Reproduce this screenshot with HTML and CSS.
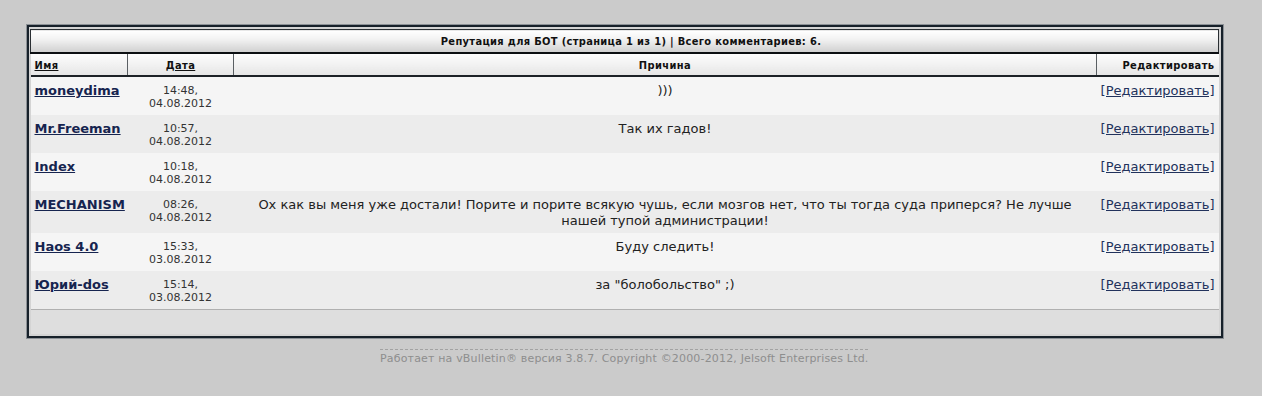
FILE: index.html
```html
<!DOCTYPE html>
<html>
<head>
  <meta charset="UTF-8">
  <title>Репутация для БОТ</title>
  <link rel="stylesheet" href="styles.css">
</head>
<body>
  <div class="wrap">
    <div class="tborder">
      <table class="rep">
        <colgroup>
          <col class="col-name">
          <col class="col-date">
          <col>
          <col class="col-edit">
        </colgroup>
        <tr>
          <td class="tcat" colspan="4">Репутация для БОТ (страница 1 из 1) | Всего комментариев: 6.</td>
        </tr>
        <tr class="thead">
          <td class="c-name"><a href="#">Имя</a></td>
          <td class="c-date"><a href="#">Дата</a></td>
          <td class="c-reason">Причина</td>
          <td class="c-edit">Редактировать</td>
        </tr>
        <tr class="alt1">
          <td class="c-name"><a class="user" href="#">moneydima</a></td>
          <td class="c-date">14:48,<br>04.08.2012</td>
          <td class="c-reason">)))</td>
          <td class="c-edit"><a href="#">[Редактировать]</a></td>
        </tr>
        <tr class="alt2">
          <td class="c-name"><a class="user" href="#">Mr.Freeman</a></td>
          <td class="c-date">10:57,<br>04.08.2012</td>
          <td class="c-reason">Так их гадов!</td>
          <td class="c-edit"><a href="#">[Редактировать]</a></td>
        </tr>
        <tr class="alt1">
          <td class="c-name"><a class="user" href="#">Index</a></td>
          <td class="c-date">10:18,<br>04.08.2012</td>
          <td class="c-reason"></td>
          <td class="c-edit"><a href="#">[Редактировать]</a></td>
        </tr>
        <tr class="alt2">
          <td class="c-name"><a class="user" href="#">MECHANISM</a></td>
          <td class="c-date">08:26,<br>04.08.2012</td>
          <td class="c-reason">Ох как вы меня уже достали! Порите и порите всякую чушь, если мозгов нет, что ты тогда суда приперся? Не лучше нашей тупой администрации!</td>
          <td class="c-edit"><a href="#">[Редактировать]</a></td>
        </tr>
        <tr class="alt1">
          <td class="c-name"><a class="user" href="#">Haos 4.0</a></td>
          <td class="c-date">15:33,<br>03.08.2012</td>
          <td class="c-reason">Буду следить!</td>
          <td class="c-edit"><a href="#">[Редактировать]</a></td>
        </tr>
        <tr class="alt2">
          <td class="c-name"><a class="user" href="#">Юрий-dos</a></td>
          <td class="c-date">15:14,<br>03.08.2012</td>
          <td class="c-reason">за "болобольство" ;)</td>
          <td class="c-edit"><a href="#">[Редактировать]</a></td>
        </tr>
        <tr>
          <td class="tfoot" colspan="4"></td>
        </tr>
      </table>
    </div>
    <div class="copyright">Работает на vBulletin® версия 3.8.7. Copyright ©2000-2012, Jelsoft Enterprises Ltd.</div>
  </div>
</body>
</html>
```

FILE: styles.css
```css
body {
  margin: 0;
  padding: 0;
  background-color: #cbcbcb;
  font-family: "DejaVu Sans", Verdana, sans-serif;
  color: #222;
}

.wrap {
  padding: 25px 0 0 27px;
  width: 1196px;
}

.tborder {
  border: 2px solid #17212a;
  box-shadow: 0 0 0 1px #8c9196;
  background-color: #d4d4d4;
  padding: 2px 2px 2px 1px;
}

.rep {
  width: 100%;
  border-collapse: collapse;
  table-layout: fixed;
}

.col-name {
  width: 97px;
}

.col-date {
  width: 106px;
}

.col-edit {
  width: 122px;
}

.rep td {
  padding: 0 4px;
}

.tcat {
  height: 22px;
  background: linear-gradient(#ffffff, #f2f2f2 40%, #cfcfcf);
  border: 1px solid #2a2f33;
  border-bottom: 2px solid #0c0f12;
  text-align: center;
  font-family: "DejaVu Sans Condensed", Tahoma, sans-serif;
  font-weight: bold;
  font-size: 11px;
  letter-spacing: 0.33px;
  color: #111;
}

.rep td.tcat {
  padding-left: 17px;
}

.thead td {
  height: 19px;
  background: linear-gradient(#fdfdfd, #e6e6e6);
  border-left: 1px solid #5a5f63;
  border-bottom: 2px solid #1c2126;
  font-family: "DejaVu Sans Condensed", Tahoma, sans-serif;
  font-weight: bold;
  font-size: 11px;
  letter-spacing: 0.4px;
  color: #111;
  padding-top: 2px;
}

.thead td:first-child {
  border-left: none;
}

.thead td.c-reason {
  text-align: center;
}

.thead a {
  color: #111;
}

.c-name {
  text-align: left;
  white-space: nowrap;
}

.c-date {
  text-align: center;
}

.c-reason {
  text-align: center;
}

.c-edit {
  text-align: right;
}

.alt1 td,
.alt2 td {
  vertical-align: top;
  height: 27px;
  padding-top: 6px;
  padding-bottom: 4px;
  font-size: 13px;
  line-height: 16px;
}

.alt1 td {
  background-color: #f5f5f5;
}

.alt2 td {
  background-color: #ececec;
}

.alt1 td.c-date,
.alt2 td.c-date {
  font-size: 11px;
  line-height: 13px;
  color: #333;
  padding-top: 7px;
}

.alt1 td.c-reason,
.alt2 td.c-reason {
  padding-left: 20px;
  padding-right: 20px;
}

a {
  color: #1c2a55;
}

a.user {
  font-weight: bold;
  color: #16244f;
}

.c-edit a {
  color: #22325c;
}

.tfoot {
  height: 24px;
  background-color: #dedede;
  border-top: 1px solid #b0b0b0;
}

.copyright {
  width: 488px;
  margin: 11px 0 0 353px;
  border-top: 1px dashed #a2a2a2;
  padding-top: 2px;
  font-size: 11px;
  letter-spacing: 0.17px;
  color: #8e8e8e;
  text-align: center;
  white-space: nowrap;
}
```
